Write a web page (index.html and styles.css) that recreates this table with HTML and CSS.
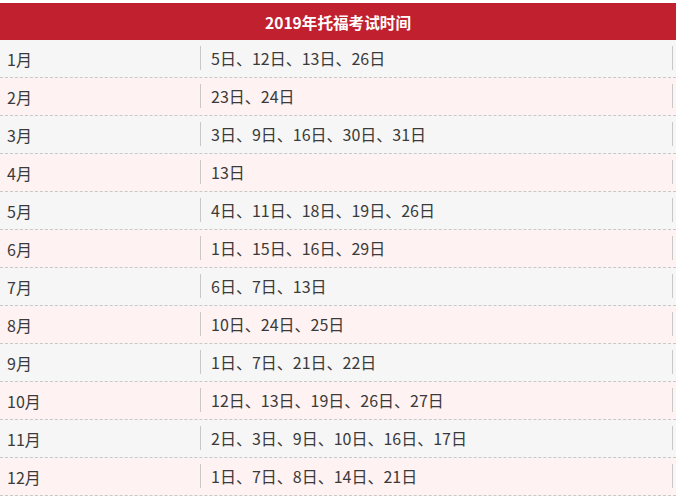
FILE: index.html
```html
<!DOCTYPE html>
<html lang="zh">
<head>
<meta charset="utf-8">
<link rel="stylesheet" href="styles.css">
</head>
<body>
<div class="table">
  <div class="head">2019年托福考试时间</div>
  <div class="row gray"><div class="m">1月</div><div class="d">5日、12日、13日、26日</div></div>
  <div class="row pink"><div class="m">2月</div><div class="d">23日、24日</div></div>
  <div class="row gray"><div class="m">3月</div><div class="d">3日、9日、16日、30日、31日</div></div>
  <div class="row pink"><div class="m">4月</div><div class="d">13日</div></div>
  <div class="row gray"><div class="m">5月</div><div class="d">4日、11日、18日、19日、26日</div></div>
  <div class="row pink"><div class="m">6月</div><div class="d">1日、15日、16日、29日</div></div>
  <div class="row gray"><div class="m">7月</div><div class="d">6日、7日、13日</div></div>
  <div class="row pink"><div class="m">8月</div><div class="d">10日、24日、25日</div></div>
  <div class="row gray"><div class="m">9月</div><div class="d">1日、7日、21日、22日</div></div>
  <div class="row pink"><div class="m">10月</div><div class="d">12日、13日、19日、26日、27日</div></div>
  <div class="row gray"><div class="m">11月</div><div class="d">2日、3日、9日、10日、16日、17日</div></div>
  <div class="row pink"><div class="m">12月</div><div class="d">1日、7日、8日、14日、21日</div></div>
</div>
</body>
</html>
```
FILE: styles.css
```css
html, body {
  margin: 0;
  padding: 0;
  background: #fff;
}
body {
  font-family: "Noto Sans CJK SC", "Noto Sans", sans-serif;
  color: #3a3a3a;
  padding-top: 3px;
}
.table {
  width: 676px;
}
.head {
  height: 37px;
  background: #c1212f;
  color: #fff;
  font-weight: bold;
  font-size: 15.6px;
  display: flex;
  align-items: center;
  justify-content: center;
}
.row {
  height: 38px;
  box-sizing: border-box;
  border-bottom: 1px dashed #c8c8c8;
  display: flex;
  align-items: center;
  font-size: 16px;
}
.gray { background: #f6f6f6; }
.pink { background: #fff2f2; }
.m {
  width: 200px;
  padding-left: 7px;
  box-sizing: border-box;
}
.d {
  width: 473px;
  height: 24px;
  line-height: 24px;
  box-sizing: border-box;
  border-left: 1px solid #c8c8c8;
  border-right: 1px solid #c8c8c8;
  padding-left: 10px;
  margin-top: -1px;
}
```
